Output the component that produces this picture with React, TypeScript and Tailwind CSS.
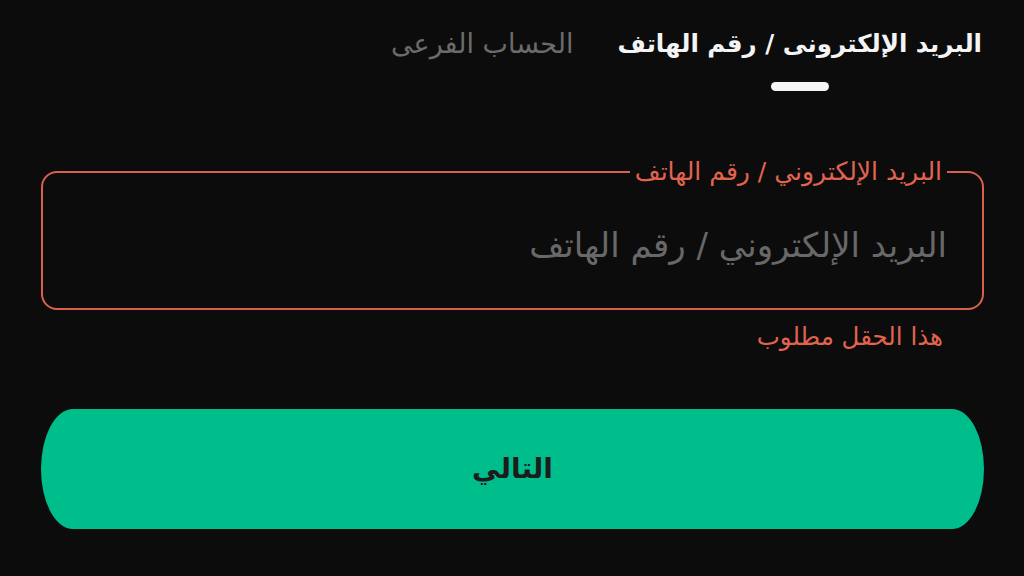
import React, { useState } from 'react';

// Login step: choose account type, enter email/phone, continue
export default function App() {
  const [tab, setTab] = useState(0);
  const [value, setValue] = useState('');

  const tabs = ['البريد الإلكترونى / رقم الهاتف', 'الحساب الفرعى'];

  return (
    <div
      dir="rtl"
      className="w-[1024px] h-[576px] bg-[#0c0c0c] overflow-hidden pl-[41px] pr-[40px]"
      style={{ fontFamily: '"DejaVu Sans", "Noto Sans", sans-serif' }}
    >
      {/* tabs */}
      <div className="flex items-start gap-[44px] pt-[22px] pr-[2px]">
        {tabs.map((t, i) => (
          <button
            key={i}
            onClick={() => setTab(i)}
            className="flex flex-col items-center"
          >
            <span
              className={`leading-[44px] ${
                i === tab ? 'text-[24.5px] text-[#f4f4f4] font-bold' : 'text-[27px] text-[#6b6b6b]'
              }`}
            >
              {t}
            </span>
            <span
              className={`mt-[16px] w-[58px] h-[9px] rounded-full ${
                i === tab ? 'bg-[#f4f4f4]' : 'bg-transparent'
              }`}
            />
          </button>
        ))}
      </div>

      {/* input */}
      <fieldset className="mt-[70px] h-[149px] border-2 border-[#d9604c] rounded-[16px] pr-[35px] pl-[20px] min-w-0">
        <legend className="px-[5px] text-[25px] leading-[22px] text-[#e2644f]">
          البريد الإلكتروني / رقم الهاتف
        </legend>
        <input
          value={value}
          onChange={(e) => setValue(e.target.value)}
          placeholder="البريد الإلكتروني / رقم الهاتف"
          className="w-full h-[124px] bg-transparent outline-none text-[34px] text-[#eeeeee] placeholder:text-[#686868]"
        />
      </fieldset>
      <p className="mt-[10px] pr-[41px] text-[24.5px] leading-[34px] text-[#e2644f]">
        هذا الحقل مطلوب
      </p>

      {/* next button */}
      <button className="mt-[55px] w-full h-[120px] rounded-[32px_/_60px] bg-[#00bd8c] text-[#1c1c1c] text-[28px] font-bold">
        التالي
      </button>
    </div>
  );
}
